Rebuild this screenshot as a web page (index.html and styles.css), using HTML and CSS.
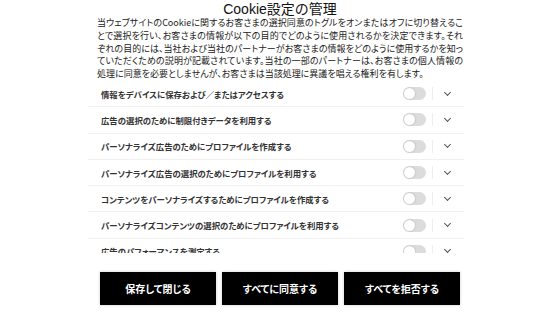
FILE: index.html
```html
<!DOCTYPE html>
<html lang="ja">
<head>
    <meta charset="UTF-8">
    <meta name="viewport" content="width=device-width, initial-scale=1.0">
    <title>Cookie設定の管理</title>
    <link rel="stylesheet" href="styles.css">
</head>
<body>

<!-- Cookie設定 -->
<div class="cookie-panel">
    <h1 class="cookie-title">Cookie設定の管理</h1>
    <p class="cookie-desc">当ウェブサイトのCookieに関するお客さまの選択同意のトグルをオンまたはオフに切り替えることで選択を行い、お客さまの情報が以下の目的でどのように使用されるかを決定できます。それぞれの目的には、当社および当社のパートナーがお客さまの情報をどのように使用するかを知っていただくための説明が記載されています。当社の一部のパートナーは、お客さまの個人情報の処理に同意を必要としませんが、お客さまは当該処理に異議を唱える権利を有します。</p>

    <div class="purpose-list">
        <div class="purpose-row">
            <span class="purpose-name">情報をデバイスに保存および／またはアクセスする</span>
            <span class="toggle"></span>
            <span class="divider"></span>
            <span class="chevron"></span>
        </div>
        <div class="purpose-row">
            <span class="purpose-name">広告の選択のために制限付きデータを利用する</span>
            <span class="toggle"></span>
            <span class="divider"></span>
            <span class="chevron"></span>
        </div>
        <div class="purpose-row">
            <span class="purpose-name">パーソナライズ広告のためにプロファイルを作成する</span>
            <span class="toggle"></span>
            <span class="divider"></span>
            <span class="chevron"></span>
        </div>
        <div class="purpose-row">
            <span class="purpose-name">パーソナライズ広告の選択のためにプロファイルを利用する</span>
            <span class="toggle"></span>
            <span class="divider"></span>
            <span class="chevron"></span>
        </div>
        <div class="purpose-row">
            <span class="purpose-name">コンテンツをパーソナライズするためにプロファイルを作成する</span>
            <span class="toggle"></span>
            <span class="divider"></span>
            <span class="chevron"></span>
        </div>
        <div class="purpose-row">
            <span class="purpose-name">パーソナライズコンテンツの選択のためにプロファイルを利用する</span>
            <span class="toggle"></span>
            <span class="divider"></span>
            <span class="chevron"></span>
        </div>
        <div class="purpose-row">
            <span class="purpose-name">広告のパフォーマンスを測定する</span>
            <span class="toggle"></span>
            <span class="divider"></span>
            <span class="chevron"></span>
        </div>
    </div>

    <div class="cookie-buttons">
        <button>保存して閉じる</button>
        <button>すべてに同意する</button>
        <button>すべてを拒否する</button>
    </div>
</div>

</body>
</html>
```

FILE: styles.css
```css
body {
    font-family: "Liberation Sans", "Noto Sans CJK JP", sans-serif;
    background-color: #fff;
    margin: 0;
    padding: 0;
    color: #222;
}

.cookie-panel {
    width: 384px;
    margin: 0 auto;
    height: 315px;
    display: flex;
    flex-direction: column;
}

.cookie-title {
    margin: 0;
    padding-top: 2px;
    font-size: 14px;
    line-height: 15px;
    font-weight: normal;
    text-align: center;
    color: #111;
}

.cookie-desc {
    margin: 0;
    padding: 0 9px;
    font-family: "Noto Sans CJK JP", sans-serif;
    font-feature-settings: "palt";
    font-size: 9px;
    line-height: 12.8px;
    text-align: justify;
    color: #222;
}

.purpose-list {
    height: 172px;
    overflow: hidden;
    margin-right: 8px;
}

.purpose-row {
    display: flex;
    align-items: center;
    height: 26.3px;
    padding: 0 12px 0 13px;
    border-bottom: 1px solid #f0f0f0;
    box-sizing: border-box;
}

.purpose-name {
    flex: 1;
    font-family: "Noto Sans CJK JP", sans-serif;
    font-feature-settings: "palt";
    font-size: 8.4px;
    font-weight: bold;
    color: #333;
}

.toggle {
    width: 23px;
    height: 13px;
    border-radius: 7px;
    background-color: #dcdcdc;
    position: relative;
}

.toggle::after {
    content: "";
    position: absolute;
    left: 1px;
    top: 1px;
    width: 11px;
    height: 11px;
    border-radius: 50%;
    background-color: #fff;
    box-shadow: 0 0 2px rgba(0, 0, 0, 0.25);
}

.divider {
    width: 1px;
    height: 13px;
    background-color: #eee;
    margin: 0 10px 0 6px;
}

.chevron {
    width: 4px;
    height: 4px;
    border-right: 1.3px solid #555;
    border-bottom: 1.3px solid #555;
    transform: rotate(45deg);
    margin: -3px 2px 0;
}

.cookie-buttons {
    display: flex;
    gap: 6px;
    padding: 19px 12px 0;
}

.cookie-buttons button {
    flex: 1;
    height: 33px;
    border: none;
    background-color: #000;
    color: #fff;
    font-family: "Noto Sans CJK JP", sans-serif;
    font-feature-settings: "palt";
    font-size: 10px;
    font-weight: bold;
    box-shadow: 0 0 3px rgba(0, 0, 0, 0.2);
    cursor: pointer;
}
```
